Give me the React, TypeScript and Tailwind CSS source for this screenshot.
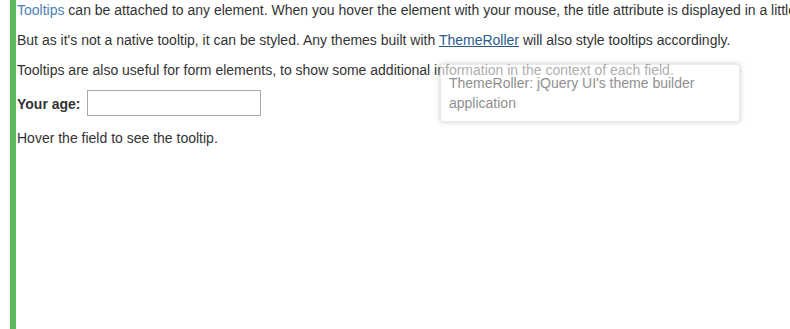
export default function App() {
    return (
        <div className="relative h-[329px] w-full overflow-hidden bg-white font-['Liberation_Sans',Arial,sans-serif] text-[14px] leading-[16px] text-[#333]">
            <div className="ml-[10px] h-full border-l-[6px] border-[#5cb85c] pl-px pt-[2px]">
                <p className="whitespace-nowrap">
                    <a href="#" className="text-[#4a7fb5]">Tooltips</a> can be attached to any element. When you hover the element with your mouse, the title attribute is displayed in a little box next to the element, just like a native tooltip.
                </p>
                <p className="mt-[14px] whitespace-nowrap">
                    But as it's not a native tooltip, it can be styled. Any themes built with{" "}
                    <a href="#" className="text-[#2a5b8c] underline">ThemeRoller</a> will also style tooltips accordingly.
                </p>
                <p className="mt-[14px] whitespace-nowrap">
                    Tooltips are also useful for form elements, to show some additional information in the context of each field.
                </p>
                <div className="mt-[12px] flex h-[26px] items-center gap-[6px]">
                    <label htmlFor="age" className="pt-[2px] font-bold">Your age:</label>
                    <input
                        id="age"
                        type="text"
                        className="h-[26px] w-[174px] border border-[#a9a9a9] bg-white px-1 outline-none"
                    />
                </div>
                <p className="mt-[14px] whitespace-nowrap">Hover the field to see the tooltip.</p>
            </div>

            <div className="absolute left-[440px] top-[64px] w-[300px] rounded-[3px] border border-[#ddd] bg-white p-[8px] leading-[20px] text-[#444] opacity-60 shadow-[0_0_5px_#aaa]">
                ThemeRoller: jQuery UI's theme builder application
            </div>
        </div>
    );
}
